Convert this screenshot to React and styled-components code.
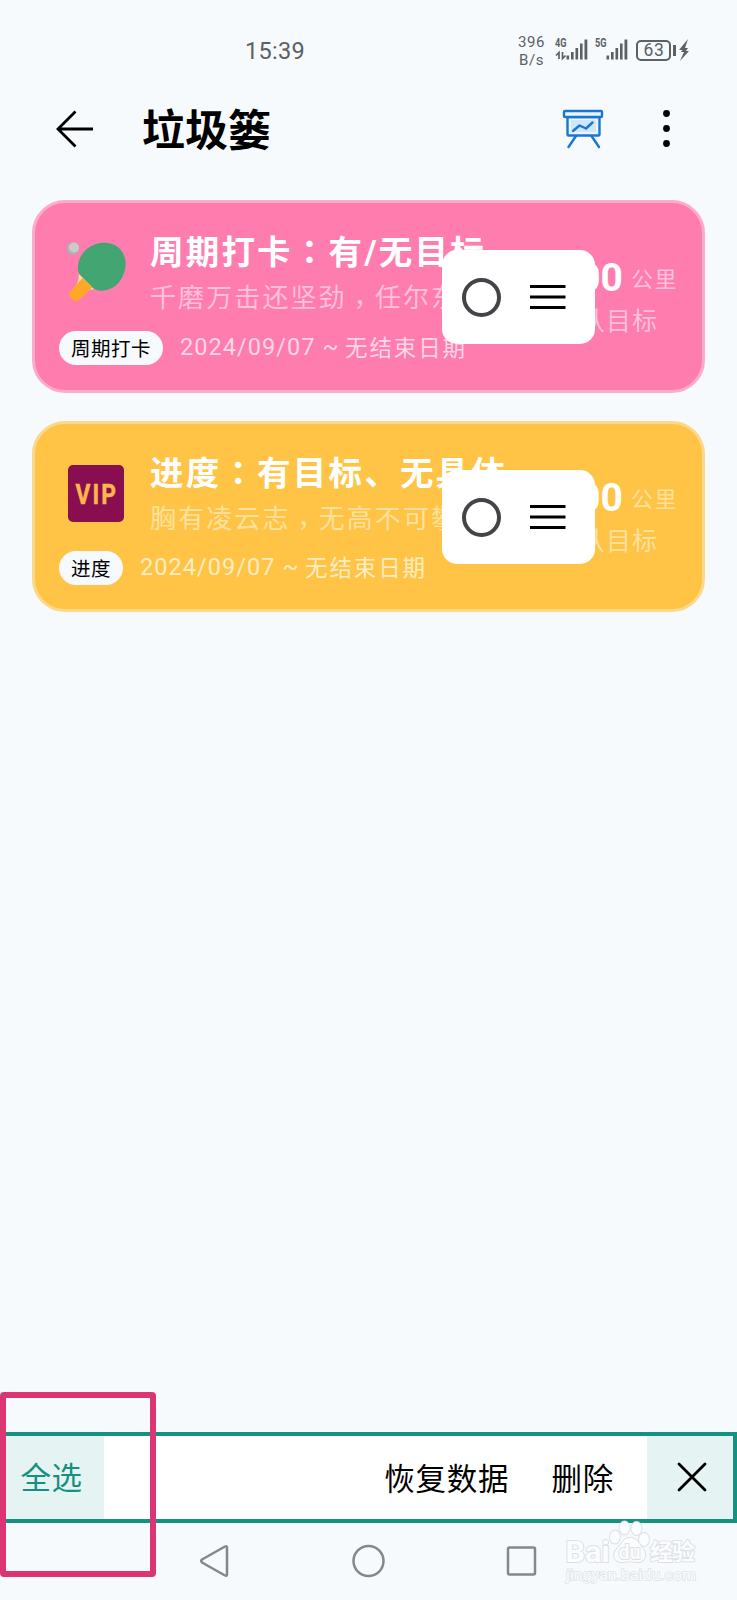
import React, { useState } from "react";
import styled, { createGlobalStyle } from "styled-components";

const GlobalStyle = createGlobalStyle`
  * {
    box-sizing: border-box;
  }

  body {
    margin: 0;
    background: #f6fafd;
    font-family: Roboto, "Noto Sans CJK SC", sans-serif;
  }

  button {
    border: 0;
    padding: 0;
    background: none;
    font-family: inherit;
    cursor: pointer;
  }

  svg {
    display: block;
    flex: none;
  }
`;

const Screen = styled.div`
  position: relative;
  display: flex;
  flex-direction: column;
  width: 737px;
  height: 1600px;
  overflow: hidden;
`;

const StatusBar = styled.div`
  display: flex;
  align-items: center;
  height: 100px;
  padding: 0 47px 0 245px;
  color: #5c6164;
`;

const Clock = styled.span`
  flex: 1;
  padding-top: 2px;
  font-size: 23.5px;
  letter-spacing: 0.3px;
`;

const Speed = styled.div`
  width: 27px;
  margin-right: 10px;
  padding-top: 1px;
  font-size: 15px;
  line-height: 18px;
  letter-spacing: 0.5px;
  text-align: center;
`;

const SignalBox = styled.div`
  display: flex;
  width: 33px;
  margin-right: ${(props) => props.$gap}px;
`;

const SignalLabel = styled.div`
  display: flex;
  flex-direction: column;
  width: 11px;
  height: 22px;
  margin-top: -5px;
`;

const Battery = styled.div`
  display: flex;
  align-items: center;
  justify-content: center;
  width: 35px;
  height: 21px;
  padding-left: 1px;
  border: 2px solid #5c6164;
  border-radius: 5px;
  font-size: 17.5px;
  line-height: 17px;
  letter-spacing: 0.6px;
`;

const BatteryTip = styled.div`
  width: 3px;
  height: 11px;
  margin: 0 3px 0 2px;
  background: #5c6164;
`;

const Header = styled.header`
  display: flex;
  align-items: center;
  height: 58px;
  padding: 0 50px 0 56px;
`;

const Titulo = styled.h1`
  flex: 1;
  margin: 0 0 0 48px;
  padding-top: 3px;
  color: #000;
  font-size: 43px;
  line-height: 58px;
  font-weight: 700;
`;

const MenuButton = styled.button`
  margin-left: 43px;
`;

const List = styled.main`
  display: flex;
  flex: 1;
  flex-direction: column;
  gap: 28px;
  padding: 42px 32px 0 32px;
`;

const Card = styled.article`
  position: relative;
  display: flex;
  flex-direction: column;
  height: ${(props) => props.$height}px;
  padding: 29px 0 0 24px;
  border: 3px solid ${(props) => props.$border};
  border-radius: 33px;
  background: ${(props) => props.$color};
  white-space: nowrap;
`;

const CardMain = styled.div`
  display: flex;
  height: ${(props) => 99 - props.$lift}px;
`;

const CardIcon = styled.div`
  width: 91px;
  padding: ${(props) => 10 - props.$lift}px 0 0 7px;
`;

const CardText = styled.div`
  width: 380px;
`;

const CardTitle = styled.h2`
  height: 42px;
  margin: 0;
  color: #fff;
  font-size: 33.5px;
  line-height: 42px;
  font-weight: 700;
  letter-spacing: 2.2px;
`;

const CardNote = styled.p`
  height: 40px;
  margin: 4px 0 0;
  color: ${(props) => props.$color};
  font-size: 26px;
  line-height: 40px;
  font-weight: 400;
  letter-spacing: 2.1px;
`;

// the traditional face centres its colon and comma in the square
const Signo = styled.span`
  display: inline-block;
  font-family: "Noto Sans CJK TC", sans-serif;
  line-height: 1;
  transform: translateY(${(props) => props.$drop}em);
`;

const CardValue = styled.div`
  display: flex;
  flex-direction: column;
  width: 148px;
  padding-top: ${(props) => 23 - props.$lift}px;
  align-items: flex-end;
`;

const Amount = styled.div`
  display: flex;
  align-items: center;
  height: 46px;
  color: ${(props) => props.$color};
  font-size: 22px;
  line-height: 46px;
  font-weight: 400;
  letter-spacing: 1.5px;
`;

const AmountNumber = styled.strong`
  margin-right: 8px;
  color: #fff;
  font-size: 39px;
  font-weight: 700;
  letter-spacing: 0;
`;

const AmountUnit = styled.span`
  padding-top: 3px;
`;

const Goal = styled.div`
  height: 40px;
  padding-right: 20px;
  color: ${(props) => props.$color};
  font-size: 25px;
  line-height: 41px;
  font-weight: 400;
  letter-spacing: 1px;
`;

const CardFooter = styled.div`
  display: flex;
  align-items: center;
  height: 34px;
`;

const Tag = styled.span`
  height: 34px;
  padding: 0 12px;
  border-radius: 17px;
  background: #f6fafd;
  color: #000;
  font-size: 19.5px;
  line-height: 37px;
  letter-spacing: 0.5px;
`;

const Period = styled.span`
  display: flex;
  margin-left: 17px;
  color: ${(props) => props.$color};
  font-size: 22.5px;
  line-height: 38px;
  font-weight: 400;
  letter-spacing: 1.9px;
`;

const PeriodStart = styled.span`
  width: 165px;
  font-size: 23.5px;
  line-height: 37px;
  letter-spacing: 1.05px;
`;

// floats over the card while the list is in edit mode
const Handle = styled.div`
  position: absolute;
  top: ${(props) => 47 - props.$lift}px;
  right: 107px;
  display: flex;
  align-items: center;
  gap: 29px;
  width: 153px;
  height: 94px;
  padding-left: 20px;
  border-radius: 15px;
  background: #fff;
`;

const Radio = styled.button`
  width: 39px;
  height: 39px;
  border: 4px solid #434447;
  border-radius: 50%;
  background: ${(props) => (props.$checked ? "#149180" : "#fff")};
`;

const ActionBar = styled.div`
  display: flex;
  height: 91px;
  border: 4px solid #149180;
  background: #fff;
`;

const SelectAll = styled.button`
  width: 100px;
  padding: 0 5px 3px 0;
  background: #e5f3f2;
  color: #149180;
  font-size: 30.5px;
  letter-spacing: 0.5px;
`;

const Actions = styled.div`
  display: flex;
  flex: 1;
  justify-content: flex-end;
  gap: 42px;
  padding: 0 33px 2px 0;
`;

const ActionButton = styled.button`
  color: #000;
  font-size: 30.5px;
  letter-spacing: 0.8px;
`;

const CloseButton = styled.button`
  display: flex;
  align-items: center;
  justify-content: center;
  width: 86px;
  padding: 0 0 1px 4px;
  background: #e5f3f2;
`;

const NavBar = styled.nav`
  display: flex;
  align-items: center;
  justify-content: space-between;
  height: 77px;
  padding: 0 200px 1px 198px;
`;

const Marker = styled.div`
  position: absolute;
  top: 1392px;
  left: 0;
  width: 156px;
  height: 185px;
  border: 6px solid #db3673;
  border-radius: 4px;
`;

const Watermark = styled.svg`
  position: absolute;
  left: 560px;
  top: 1516px;
`;

const ink = "#5c6164";

function Signal({ label, data, gap }) {
  return (
    <SignalBox $gap={gap}>
      <SignalLabel>
        <svg width="12" height="16" viewBox="0 0 12 16" fill={ink}>
          <text
            x="0"
            y="12.500"
            fontSize="12.500"
            fontWeight="700"
            textLength="11.500"
            lengthAdjust="spacingAndGlyphs"
          >
            {label}
          </text>
        </svg>
        {data && (
          <svg width="11" height="11" viewBox="0 0 11 11" fill="none" stroke={ink} strokeWidth="1.700">
            <path d="M4 9V2.500L1 5.500M7.500 2v6.500l3-3" />
          </svg>
        )}
      </SignalLabel>
      <svg width="22" height="22" viewBox="0 0 22 22" fill={ink}>
        <rect x="0.500" y="16.500" width="2.600" height="4" />
        <rect x="5" y="13" width="2.600" height="7.500" />
        <rect x="9.500" y="9" width="2.600" height="11.500" />
        <rect x="14" y="4.500" width="2.600" height="16" />
        <rect x="18.500" y="0.500" width="2.800" height="20" />
      </svg>
    </SignalBox>
  );
}

function Paddle() {
  return (
    <svg width="62" height="62" viewBox="0 0 62 62">
      <circle cx="7" cy="6.500" r="6.300" fill="#b0b0b0" />
      <circle cx="8" cy="5.500" r="5" fill="#cbcac7" />
      <path d="M12.500 31c1 5-.5 8-2 12l8 8c4-3 7-4.500 11-3.500z" fill="#ffe0a3" />
      <path d="M16.500 36l10 9.500-13.500 12.500q-3 2-6 0l-3-3q-2-3 0-5z" fill="#ffa726" />
      <path
        d="M13 32C10 24 13 13 22 6 32-1 46-1 54 7c8 9 7 22 0 32-7 9-18 12-26 8z"
        fill="#43a572"
      />
    </svg>
  );
}

function Vip() {
  return (
    <svg width="62" height="62" viewBox="0 0 62 62">
      <rect x="2" y="3" width="56" height="57" rx="5" fill="#880e4f" />
      <text
        transform="translate(9.500 41.500) scale(0.8 1)"
        letterSpacing="2.600"
        fill="#ffb74d"
        stroke="#ffb74d"
        strokeWidth="0.500"
        fontSize="28.500"
        fontWeight="700"
      >
        VIP
      </text>
    </svg>
  );
}

const tareas = [
  {
    id: 1,
    icon: <Paddle />,
    title: ["周期打卡", "：", "有/无目标"],
    note: ["千磨万击还坚劲", "，", "任尔东"],
    tag: "周期打卡",
    color: "#ff7caf",
    border: "#fdabcb",
    soft: "#ffc0da",
    date: "#ffd6e7",
    height: 193,
    lift: 0,
  },
  {
    id: 2,
    icon: <Vip />,
    title: ["进度", "：", "有目标、无具体"],
    note: ["胸有凌云志", "，", "无高不可攀"],
    tag: "进度",
    color: "#ffc445",
    border: "#fcd88b",
    soft: "#ffe19e",
    date: "#ffecc2",
    height: 191,
    lift: 1,
  },
];

function Frase({ parts, drop = 0 }) {
  const [before, sign, after] = parts;
  return (
    <>
      {before}
      <Signo $drop={drop}>{sign}</Signo>
      {after}
    </>
  );
}

function TaskCard({ task, checked, onToggle }) {
  return (
    <Card $color={task.color} $border={task.border} $height={task.height}>
      <CardMain $lift={task.lift}>
        <CardIcon $lift={task.lift}>{task.icon}</CardIcon>
        <CardText>
          <CardTitle>
            <Frase parts={task.title} />
          </CardTitle>
          <CardNote $color={task.soft}>
            <Frase parts={task.note} drop={0.28} />
          </CardNote>
        </CardText>
        <CardValue $lift={task.lift}>
          <Amount $color={task.soft}>
            <AmountNumber>0.00</AmountNumber>
            <AmountUnit>公里</AmountUnit>
          </Amount>
          <Goal $color={task.soft}>默认目标</Goal>
        </CardValue>
      </CardMain>
      <CardFooter>
        <Tag>{task.tag}</Tag>
        <Period $color={task.date}>
          <PeriodStart>2024/09/07 ~</PeriodStart>
          无结束日期
        </Period>
      </CardFooter>
      <Handle $lift={task.lift}>
        <Radio $checked={checked} onClick={onToggle} />
        <svg width="36" height="26" viewBox="0 0 36 26" stroke="#000" strokeWidth="2.800">
          <path d="M0 2.500h35.500M0 13h35.500M0 23.500h35.500" />
        </svg>
      </Handle>
    </Card>
  );
}

export default function App() {
  const [selected, setSelected] = useState([]);

  function toggle(id) {
    setSelected((current) =>
      current.includes(id) ? current.filter((x) => x !== id) : [...current, id]
    );
  }

  return (
    <Screen>
      <GlobalStyle />
      <StatusBar>
        <Clock>15:39</Clock>
        <Speed>
          396
          <br />
          B/s
        </Speed>
        <Signal label="4G" data gap={7} />
        <Signal label="5G" gap={8} />
        <Battery>63</Battery>
        <BatteryTip />
        <svg width="11" height="22" viewBox="0 0 11 22" fill={ink}>
          <path d="M9 0L0 11h3.500l-1.500 2h3L1 22l9-10H7l2-3H6z" />
        </svg>
      </StatusBar>
      <Header>
        <svg width="38" height="38" viewBox="0 0 38 38" fill="none" stroke="#000" strokeWidth="2.800">
          <path d="M37 19H3M19.500 1.500L2 19l17.500 17.500" />
        </svg>
        <Titulo>垃圾篓</Titulo>
        <svg
          width="42"
          height="40"
          viewBox="0 0 42 40"
          fill="none"
          stroke="#1976d2"
          strokeWidth="2.400"
          strokeLinecap="round"
          strokeLinejoin="round"
        >
          <path d="M14 27L6.500 38M29.500 27L37 38" />
          <rect x="5.500" y="8" width="32" height="18.500" rx="1" fill="#eaf5ff" />
          <rect x="9" y="11" width="25" height="12" fill="#cfe6fb" stroke="none" />
          <rect x="2" y="2" width="38" height="6" rx="1" fill="#eaf5ff" />
          <path d="M11 22l6.500-5.500 6.500 3 6.500-6" />
        </svg>
        <MenuButton>
          <svg width="40" height="40" viewBox="0 0 40 40">
            <circle cx="19.500" cy="4.500" r="3.400" />
            <circle cx="19.500" cy="19.500" r="3.400" />
            <circle cx="19.500" cy="34.500" r="3.400" />
          </svg>
        </MenuButton>
      </Header>
      <List>
        {tareas.map((task) => (
          <TaskCard
            key={task.id}
            task={task}
            checked={selected.includes(task.id)}
            onToggle={() => toggle(task.id)}
          />
        ))}
      </List>
      <ActionBar>
        <SelectAll onClick={() => setSelected(tareas.map((t) => t.id))}>全选</SelectAll>
        <Actions>
          <ActionButton>恢复数据</ActionButton>
          <ActionButton>删除</ActionButton>
        </Actions>
        <CloseButton onClick={() => setSelected([])}>
          <svg width="30" height="30" viewBox="0 0 30 30" stroke="#000" strokeWidth="2.800" strokeLinecap="round">
            <path d="M2 2l26 26M28 2L2 28" />
          </svg>
        </CloseButton>
      </ActionBar>
      <NavBar>
        <svg width="32" height="34" viewBox="0 0 32 34" fill="none" stroke="#85888a" strokeWidth="2.500" strokeLinejoin="round">
          <path d="M4 15.500Q2.500 17 4 18.500L27 31.500q2 1 2-1v-27q0-2-2-1z" />
        </svg>
        <svg width="34" height="34" viewBox="0 0 34 34" fill="none" stroke="#85888a" strokeWidth="2.500">
          <circle cx="17.500" cy="17" r="15" />
        </svg>
        <svg width="32" height="32" viewBox="0 0 32 32" fill="none" stroke="#85888a" strokeWidth="2.500">
          <rect x="3" y="2.500" width="27" height="27" rx="1.500" />
        </svg>
      </NavBar>
      <Marker />
      <Watermark
        width="150"
        height="72"
        viewBox="0 0 150 72"
        fill="#fafcfe"
        stroke="#dde0e3"
        strokeWidth="1.800"
        paintOrder="stroke"
        fontFamily="Roboto, 'Noto Sans CJK SC'"
      >
        <ellipse cx="55" cy="21" rx="5" ry="6.500" />
        <ellipse cx="64.500" cy="12" rx="5" ry="6.500" />
        <ellipse cx="76.500" cy="12.500" rx="5" ry="6.500" />
        <ellipse cx="84" cy="23.500" rx="5" ry="6.500" />
        <path d="M70 22c8 0 9 6 13 11 5 6 1 14-6 13-5-1-9-1-14 0-8 1-12-7-6-13 5-5 6-11 13-11z" />
        <text x="5.500" y="45.500" fontSize="29" fontWeight="700" textLength="44" lengthAdjust="spacingAndGlyphs">
          Bai
        </text>
        <text x="58.500" y="43" fontSize="21" fontWeight="700" textLength="22" lengthAdjust="spacingAndGlyphs">
          du
        </text>
        <text x="90" y="43.500" fontSize="23" fontWeight="700" textLength="45">
          经验
        </text>
        <text x="6" y="64" fontSize="15" textLength="130" lengthAdjust="spacingAndGlyphs" strokeWidth="1.500" stroke="#e0e3e6">
          jingyan.baidu.com
        </text>
      </Watermark>
    </Screen>
  );
}
